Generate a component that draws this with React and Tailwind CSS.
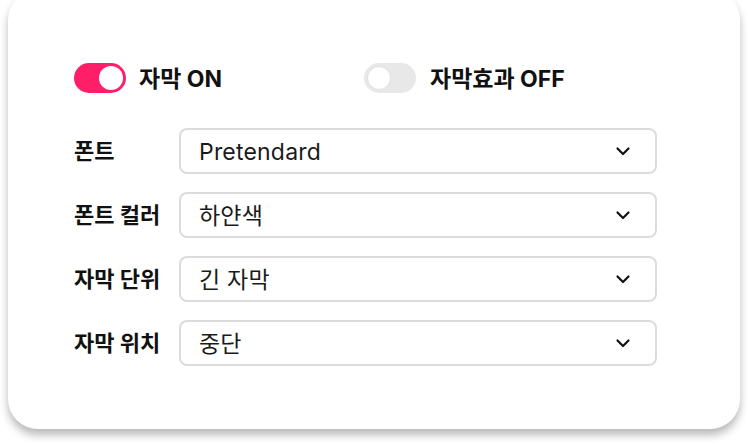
import React, { useState } from "react";

const FONT = { fontFamily: 'Inter, "Noto Sans CJK KR", sans-serif' };

const ROWS = [
  { label: "폰트", value: "Pretendard" },
  { label: "폰트 컬러", value: "하얀색" },
  { label: "자막 단위", value: "긴 자막" },
  { label: "자막 위치", value: "중단" },
];

function Toggle({ on }) {
  return (
    <div
      className={`flex h-[30px] w-[52px] items-center rounded-full px-[3px] ${
        on ? "justify-end bg-[#ff1f69]" : "justify-start bg-[#e8e8e8]"
      }`}
    >
      <div
        className={`h-[24px] w-[24px] rounded-full bg-white ${
          on ? "" : "border border-[#e0e0e0]"
        }`}
      />
    </div>
  );
}

function Select({ value }) {
  return (
    <div className="flex h-[46px] w-[478px] items-center justify-between rounded-[8px] border-2 border-[#dcdcdc] pl-[18px] pr-[23px]">
      <span className="pt-[2px] text-[23px] leading-none tracking-[0.2px] text-[#1a1a1a]">{value}</span>
      <svg width="18" height="18" viewBox="0 0 18 18" fill="none">
        <path
          d="M3.5 6.5 9 12 14.5 6.5"
          stroke="#111"
          strokeWidth="2.2"
          strokeLinecap="round"
          strokeLinejoin="round"
        />
      </svg>
    </div>
  );
}

export default function App() {
  const [sub] = useState(true);
  const [effect] = useState(false);

  return (
    <div className="h-[444px] w-[748px] overflow-hidden bg-white" style={FONT}>
      <div className="ml-[8px] mt-[-10px] w-[732px] rounded-[30px] bg-white pb-[63px] pl-[66px] pt-[72px] shadow-[0_6px_8px_rgba(0,0,0,0.28)]">
        {/* toggles */}
        <div className="flex h-[31px] items-center">
          <div className="flex w-[290px] items-center gap-[13px]">
            <Toggle on={sub} />
            <span className="pt-[3px] text-[23px] font-bold text-[#111]">자막 ON</span>
          </div>
          <div className="flex items-center gap-[14px]">
            <Toggle on={effect} />
            <span className="pt-[3px] text-[23px] font-bold text-[#111]">자막효과 OFF</span>
          </div>
        </div>

        {/* selects */}
        <div className="mt-[35px] flex flex-col gap-[18px]">
          {ROWS.map((r) => (
            <div key={r.label} className="flex items-center">
              <span className="w-[105px] text-[22px] font-bold text-[#111]">
                {r.label}
              </span>
              <Select value={r.value} />
            </div>
          ))}
        </div>
      </div>
    </div>
  );
}
